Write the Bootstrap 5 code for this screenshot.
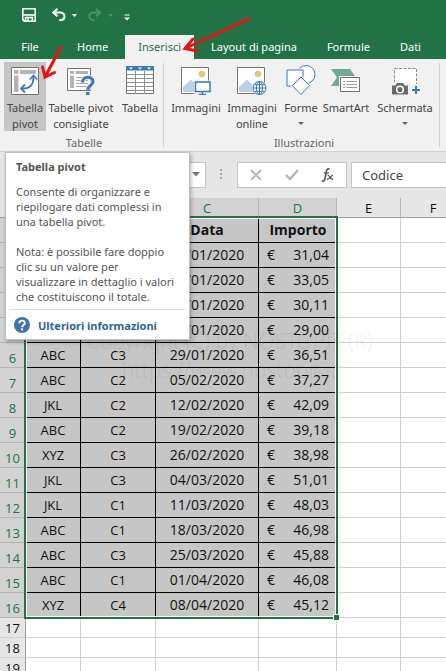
<!DOCTYPE html>
<html lang="it">
<head>
<meta charset="utf-8">
<meta name="viewport" content="width=device-width, initial-scale=1">
<title>Tabella pivot</title>
<link href="https://cdn.jsdelivr.net/npm/bootstrap@5.3.0/dist/css/bootstrap.min.css" rel="stylesheet">
<style>
  body { font-family: "Noto Sans", "Open Sans", sans-serif; font-size: 11px; line-height: 16px; color: #444; background: #fff; }
  button { font: inherit; color: inherit; background: none; border: 0; padding: 0; }
  svg { display: block; flex: none; }
  .app-top { background: #217346; color: #fff; }
  .quick-bar { height: 35px; padding: 0 0 5px 22px; }
  .tab-strip { height: 24px; }
  .tab-btn { height: 24px; padding: 0 13px; white-space: nowrap; }
  .tab-file { width: 60px; }
  .tab-on { background: #f1f1f1; color: #217346; }
  .ribbon { background: #f1f1f1; border-bottom: 1px solid #d2d2d2; height: 93px; }
  .rb-group { padding: 3px 0 0 4px; position: relative; }
  .rb-group::after { content: ""; position: absolute; right: 0; top: 4px; bottom: 4px; width: 1px; background: #d2d2d2; }
  .rb-btn { height: 69px; padding-top: 3px; white-space: nowrap; }
  .rb-btn svg { margin-bottom: 5px; }
  .rb-on { background: #c6c6c6; }
  .w-s { width: 42px; } .w-m { width: 48px; } .w-l { width: 56px; } .w-xl { width: 70px; }
  .rb-name { color: #666; margin-top: 3px; line-height: 18px; }
  .caret { width: 0; border: 3px solid transparent; border-top: 3px solid #666; border-bottom: 0; margin-top: 6px; }
  .formula { background: #e6e6e6; padding: 10px 0 11px 5px; height: 46px; }
  .fbox { background: #fff; border: 1px solid #c6c6c6; height: 26px; border-radius: 0; font-size: 13px; color: #444; outline: 0; }
  .name-box { width: 201px; }
  .fx-box { width: 110px; margin: 0 4px 0 14px; }
  .dots { margin-left: 14px; }
  .code-input { padding: 0 10px; }
  .sheet { min-height: 0; }
  .grid { table-layout: fixed; width: 100%; min-width: 466px; border-collapse: separate; border-spacing: 0; font-family: "Open Sans", sans-serif; font-size: 14px; color: #111; }
  .grid th, .grid td { padding: 0; height: 20px; line-height: 18px; border: 0 solid #d0d0d0; border-width: 0 1px 1px 0; text-align: center; white-space: nowrap; overflow: hidden; }
  .grid thead th { background: #e6e6e6; font-weight: 400; border-color: #b4b4b4 #b4b4b4 #9b9b9b; font-size: 13px; }
  .grid tbody th { background: #e6e6e6; font-weight: 400; font-size: 13px; border-right-color: #9b9b9b; vertical-align: bottom; }
  .grid thead th.on, .grid .sel th { background: #d2d2d2; color: #217346; }
  .grid .sel th, .grid .sel td { height: 25px; }
  .grid .sel th { border-bottom-color: #b4b4b4; }
  .grid .sel td:nth-child(-n+5) { background: #c6c6c6; border-color: #000; vertical-align: middle; }
  .grid .sel td:nth-child(-n+3) { font-size: 13px; }
  .grid .sel td:nth-child(5) { padding: 0 7px 0 8px; }
  .grid .title-row td:nth-child(n) { font-weight: 700; font-size: 14px; }
  .c-head { width: 26px; } .c-a { width: 55px; } .c-b { width: 75px; } .c-c { width: 103px; } .c-d { width: 78px; } .c-e { width: 64px; }
  .sel-frame { left: 24px; top: 18px; width: 314px; height: 403px; border: 2px solid #217346; box-shadow: inset 0 0 0 1px #fff; }
  .sel-handle { right: -4px; bottom: -4px; width: 7px; height: 7px; background: #217346; border: 1px solid #fff; }
  .stamp { left: 87px; top: 129px; font-size: 21px; line-height: 29px; color: rgba(0,0,0,.08); font-weight: 300; white-space: nowrap; text-align: center; }
  .tip { left: 5px; top: 152px; width: 185px; height: 188px; background: #fff; border: 1px solid #c0c0c0; box-shadow: 1px 2px 4px rgba(0,0,0,.3); color: #555; line-height: 15px; padding: 6px 4px 0; }
  .tip-text { padding: 0 6px; white-space: nowrap; }
  .tip-text p { margin: 0 0 15px; }
  .tip-text .tip-title { margin-bottom: 10px; font-weight: 700; }
  .tip-foot { border-top: 1px solid #d8d8d8; margin-top: -10px; padding: 7px 4px; }
  .tip-foot a { color: #2b6496; font-weight: 700; text-decoration: none; white-space: nowrap; }
  .arrows { left: 0; top: 0; pointer-events: none; }
</style>
<script src="https://cdn.jsdelivr.net/npm/bootstrap@5.3.0/dist/js/bootstrap.bundle.min.js"></script>
</head>
<body class="vh-100 overflow-hidden d-flex flex-column position-relative">

<header class="app-top">
  <div class="quick-bar d-flex align-items-center">
    <button type="button" aria-label="Salva"><svg width="14" height="14" viewBox="0 0 14 14" fill="none" stroke="#fff" stroke-width="1.6"><path d="M.8.8h12.4v12.4H2.3L.8 11.7z"/><path d="M1.5 7h11"/><path d="M3.5 13V9.500h6.800V13M6 10.500v2.500"/></svg></button>
    <button type="button" class="d-flex align-items-center ms-3" aria-label="Annulla"><svg width="14" height="14" viewBox="0 0 14 14" fill="none" stroke="#fff" stroke-width="2"><path d="M5.500.8 1.300 4.500 5.500 8.200M1.500 4.500h6.500c6 0 6.300 7.800-.8 7.800"/></svg><svg class="ms-1" width="8" height="3"><path d="M2 0h5L4.500 3z" fill="#fff"/></svg></button>
    <button type="button" class="d-flex align-items-center ms-2" aria-label="Ripeti"><svg width="16" height="14" viewBox="0 0 16 14" fill="none" stroke="#4e9068" stroke-width="2"><path d="M10 .8l4.200 3.700L10 8.200M14 4.500H8c-6.500 0-6.500 7.500.5 7.800"/></svg><svg class="ms-1" width="8" height="3"><path d="M2 0h5L4.500 3z" fill="#4e9068"/></svg></button>
    <button type="button" class="mt-1" aria-label="Personalizza"><svg width="24" height="7"><path d="M10.500 1h5" stroke="#fff"/><path d="M10 3.500h6L13 6.500z" fill="#fff"/></svg></button>
  </div>
  <nav class="tab-strip d-flex gap-1">
    <button type="button" class="tab-btn tab-file">File</button>
    <button type="button" class="tab-btn">Home</button>
    <button type="button" class="tab-btn tab-on">Inserisci</button>
    <button type="button" class="tab-btn">Layout di pagina</button>
    <button type="button" class="tab-btn">Formule</button>
    <button type="button" class="tab-btn">Dati</button>
  </nav>
</header>

<section class="ribbon d-flex">
  <div class="rb-group">
    <div class="d-flex">
      <button type="button" class="rb-btn rb-on w-s d-flex flex-column align-items-center">
        <svg width="28" height="30" viewBox="0 0 28 30"><path d="M.5 2.500h27v27H.5z" fill="#fff" stroke="#737373"/><path d="M3 5h4.500v4H3zM9 5h16v4H9zM3 10.500h4.500V27H3z" fill="#b3b3b3"/><path d="M11 23.500c8 .5 11.500-3.500 11.500-12" fill="none" stroke="#3b78b5" stroke-width="1.800"/><path d="M18.800 14.500l3.700-4 3.700 4M14 19.500l-4 4 4 4" fill="none" stroke="#3b78b5" stroke-width="1.800"/></svg>
        <span>Tabella</span><span>pivot</span>
      </button>
      <button type="button" class="rb-btn w-xl d-flex flex-column align-items-center">
        <svg width="28" height="30" viewBox="0 0 28 30"><path d="M.5 3.500h23v22H.5z" fill="#fff" stroke="#737373"/><path d="M3 6h4v3H3zM8.500 6H21v3H8.500zM3 10.500h4V23H3z" fill="#b3b3b3"/><path d="M9 12.500h12M9 15.500h12M9 18.500h12M9 21.500h12" stroke="#aaa"/><path d="M15.500 17.500c0-7 10.500-7 10.500-.8 0 4-5.200 3.600-5.200 8" fill="none" stroke="#f1f1f1" stroke-width="5"/><path d="M15.500 17.500c0-7 10.500-7 10.500-.8 0 4-5.200 3.600-5.200 8" fill="none" stroke="#3b78b5" stroke-width="3"/><path d="M19 27h3.500v3H19z" fill="#3b78b5"/></svg>
        <span>Tabelle pivot</span><span>consigliate</span>
      </button>
      <button type="button" class="rb-btn w-m d-flex flex-column align-items-center">
        <svg width="28" height="30" viewBox="0 0 28 30"><path d="M.5 2.500h27v26H.5z" fill="#fff" stroke="#737373"/><path d="M0 1h28v4.500H0z" fill="#3b78b5"/><path d="M3 2.500h4L5 4.500zM12 2.500h4L14 4.500zM21 2.500h4L23 4.500z" fill="#fff"/><path d="M1 9.500h26M1 13.500h26M1 17.500h26M1 21.500h26M1 25.500h26M9.500 6v23M18.500 6v23" stroke="#909090"/></svg>
        <span>Tabella</span>
      </button>
    </div>
    <div class="rb-name text-center">Tabelle</div>
  </div>
  <div class="rb-group">
    <div class="d-flex">
      <button type="button" class="rb-btn w-l d-flex flex-column align-items-center">
        <svg width="30" height="30" viewBox="0 0 30 30"><path d="M.5 2.500h27v26H.5z" fill="#fff" stroke="#737373"/><circle cx="21" cy="9" r="3.200" fill="#e6c17a"/><path d="M2 27v-5l8-7.500 9 9V27z" fill="#bdd0e6"/><path d="M13 15.500h17V29H13z" fill="#f1f1f1"/><path d="M14.500 17h14.500v9.500H14.500z" fill="#fff" stroke="#3b78b5" stroke-width="1.500"/><path d="M18 29.300h7M21.500 26.500v3" stroke="#3b78b5" stroke-width="1.300"/></svg>
        <span>Immagini</span>
      </button>
      <button type="button" class="rb-btn w-l d-flex flex-column align-items-center">
        <svg width="30" height="30" viewBox="0 0 30 30"><path d="M.5 2.500h27v26H.5z" fill="#fff" stroke="#737373"/><circle cx="21" cy="9" r="3.200" fill="#e6c17a"/><path d="M2 27v-5l8-7.500 9 9V27z" fill="#bdd0e6"/><circle cx="22.500" cy="23" r="7.500" fill="#f1f1f1"/><g fill="#fff" stroke="#3b78b5"><circle cx="22.500" cy="23" r="6.500"/><ellipse cx="22.500" cy="23" rx="3" ry="6.500"/><path d="M16 23h13M17 19.700h11M17 26.300h11M22.500 16.500v13"/></g></svg>
        <span>Immagini</span><span>online</span>
      </button>
      <button type="button" class="rb-btn w-s d-flex flex-column align-items-center">
        <svg width="30" height="30" viewBox="0 0 30 30" fill="#fff" stroke="#3b78b5"><circle cx="20" cy="9.500" r="9"/><path d="M1 5h16v16H1z" stroke="#f1f1f1" stroke-width="3"/><path d="M1 5h16v16H1z"/><path d="M15 11l9.500 9.500L15 30 5.500 20.500z" stroke="#f1f1f1" stroke-width="2"/><path d="M15 12l8.700 8.700L15 29.400l-8.700-8.700z"/></svg>
        <span>Forme</span><span class="caret"></span>
      </button>
      <button type="button" class="rb-btn w-m d-flex flex-column align-items-center">
        <svg width="30" height="30" viewBox="0 0 30 30"><path d="M0 4h19l6 8.500-6 8.500H0l6-8.500z" fill="#73a892"/><path d="M8 11h22v17H8z" fill="#f1f1f1"/><path d="M9.500 12.500h19v14h-19z" fill="#fff" stroke="#737373"/><path d="M12 16.500h2M12 19.500h2M12 22.500h2M15.500 16.500H26M15.500 19.500H26M15.500 22.500H26" stroke="#999"/></svg>
        <span>SmartArt</span>
      </button>
      <button type="button" class="rb-btn w-xl d-flex flex-column align-items-center">
        <svg width="30" height="30" viewBox="0 0 30 30"><path d="M4.500 3.500h22v21h-22z" fill="#fff" stroke="#8a8a8a" stroke-dasharray="3 1.500"/><path d="M1 17h19v14H1zM20 19h9v9h-9z" fill="#f1f1f1"/><path d="M2 20.500h3.500l1.500-2.500h6l1.500 2.500H18V29.500H2z" fill="#6a6a6a"/><circle cx="10" cy="24.500" r="3.300" fill="#6a6a6a" stroke="#fff" stroke-width="1.500"/><path d="M22 25h8M26 21v8" stroke="#3b78b5" stroke-width="2"/></svg>
        <span>Schermata</span><span class="caret"></span>
      </button>
    </div>
    <div class="rb-name text-center">Illustrazioni</div>
  </div>
</section>

<section class="formula d-flex align-items-center">
  <div class="fbox name-box d-flex align-items-center justify-content-end px-1"><button type="button" aria-label="Casella nome"><svg width="10" height="5"><path d="M1 0h8L5 4.500z" fill="#777"/></svg></button></div>
  <svg class="dots" width="3" height="11" fill="#aaa"><path d="M0 0h2v2H0zM0 4h2v2H0zM0 8h2v2H0z"/></svg>
  <div class="fbox fx-box d-flex align-items-center justify-content-between px-2">
    <button type="button" class="ms-1" aria-label="Annulla inserimento"><svg width="12" height="12" stroke="#b4b4b4" stroke-width="1.800"><path d="M1 1l10 10M11 1L1 11"/></svg></button>
    <button type="button" aria-label="Conferma"><svg width="14" height="12" fill="none" stroke="#b4b4b4" stroke-width="2.400"><path d="M1 6l4 4 8-9"/></svg></button>
    <button type="button" class="me-1" aria-label="Inserisci funzione"><svg width="13" height="14" viewBox="0 0 13 14" fill="none" stroke="#555"><path d="M8.500 1.200C6.500.3 5.700 1.500 5.200 4L4 10.500C3.500 13 2.500 13.500.8 12.800" stroke-width="1.600"/><path d="M2.500 5H8" stroke-width="1.200"/><path d="M6.500 7.200c2-.8 2.300 4.600 5.500 4M12 7.200c-2 0-3.500 4.500-6 4" stroke-width="1.300"/></svg></button>
  </div>
  <input class="fbox code-input flex-grow-1 border-end-0" type="text" size="4" value="Codice" aria-label="Barra della formula">
</section>

<main class="sheet flex-grow-1 overflow-hidden position-relative">
  <table class="grid">
    <colgroup><col class="c-head"><col class="c-a"><col class="c-b"><col class="c-c"><col class="c-d"><col class="c-e"><col></colgroup>
    <thead><tr><th></th><th class="on"></th><th class="on"></th><th class="on">C</th><th class="on">D</th><th>E</th><th>F</th></tr></thead>
    <tbody>
      <tr class="sel title-row"><th></th><td></td><td></td><td>Data</td><td>Importo</td><td></td><td></td></tr>
      <tr class="sel"><th></th><td></td><td></td><td>01/01/2020</td><td><div class="d-flex justify-content-between"><span>€</span><span>31,04</span></div></td><td></td><td></td></tr>
      <tr class="sel"><th></th><td></td><td></td><td>08/01/2020</td><td><div class="d-flex justify-content-between"><span>€</span><span>33,05</span></div></td><td></td><td></td></tr>
      <tr class="sel"><th></th><td></td><td></td><td>15/01/2020</td><td><div class="d-flex justify-content-between"><span>€</span><span>30,11</span></div></td><td></td><td></td></tr>
      <tr class="sel"><th></th><td></td><td></td><td>22/01/2020</td><td><div class="d-flex justify-content-between"><span>€</span><span>29,00</span></div></td><td></td><td></td></tr>
      <tr class="sel"><th>6</th><td>ABC</td><td>C3</td><td>29/01/2020</td><td><div class="d-flex justify-content-between"><span>€</span><span>36,51</span></div></td><td></td><td></td></tr>
      <tr class="sel"><th>7</th><td>ABC</td><td>C2</td><td>05/02/2020</td><td><div class="d-flex justify-content-between"><span>€</span><span>37,27</span></div></td><td></td><td></td></tr>
      <tr class="sel"><th>8</th><td>JKL</td><td>C2</td><td>12/02/2020</td><td><div class="d-flex justify-content-between"><span>€</span><span>42,09</span></div></td><td></td><td></td></tr>
      <tr class="sel"><th>9</th><td>ABC</td><td>C2</td><td>19/02/2020</td><td><div class="d-flex justify-content-between"><span>€</span><span>39,18</span></div></td><td></td><td></td></tr>
      <tr class="sel"><th>10</th><td>XYZ</td><td>C3</td><td>26/02/2020</td><td><div class="d-flex justify-content-between"><span>€</span><span>38,98</span></div></td><td></td><td></td></tr>
      <tr class="sel"><th>11</th><td>JKL</td><td>C3</td><td>04/03/2020</td><td><div class="d-flex justify-content-between"><span>€</span><span>51,01</span></div></td><td></td><td></td></tr>
      <tr class="sel"><th>12</th><td>JKL</td><td>C1</td><td>11/03/2020</td><td><div class="d-flex justify-content-between"><span>€</span><span>48,03</span></div></td><td></td><td></td></tr>
      <tr class="sel"><th>13</th><td>ABC</td><td>C1</td><td>18/03/2020</td><td><div class="d-flex justify-content-between"><span>€</span><span>46,98</span></div></td><td></td><td></td></tr>
      <tr class="sel"><th>14</th><td>ABC</td><td>C3</td><td>25/03/2020</td><td><div class="d-flex justify-content-between"><span>€</span><span>45,88</span></div></td><td></td><td></td></tr>
      <tr class="sel"><th>15</th><td>ABC</td><td>C1</td><td>01/04/2020</td><td><div class="d-flex justify-content-between"><span>€</span><span>46,08</span></div></td><td></td><td></td></tr>
      <tr class="sel"><th>16</th><td>XYZ</td><td>C4</td><td>08/04/2020</td><td><div class="d-flex justify-content-between"><span>€</span><span>45,12</span></div></td><td></td><td></td></tr>
      <tr><th>17</th><td></td><td></td><td></td><td></td><td></td><td></td></tr>
      <tr><th>18</th><td></td><td></td><td></td><td></td><td></td><td></td></tr>
      <tr><th>19</th><td></td><td></td><td></td><td></td><td></td><td></td></tr>
    </tbody>
  </table>
  <div class="sel-frame position-absolute"><div class="sel-handle position-absolute"></div></div>
  <div class="stamp position-absolute">Copyright (C) by NOSTOPIT (R)<br>https://www.nostopit.it</div>
</main>

<aside class="tip position-absolute" role="note">
  <div class="tip-text">
    <p class="tip-title">Tabella pivot</p>
    <p>Consente di organizzare e<br>riepilogare dati complessi in<br>una tabella pivot.</p>
    <p>Nota: è possibile fare doppio<br>clic su un valore per<br>visualizzare in dettaglio i valori<br>che costituiscono il totale.</p>
  </div>
  <div class="tip-foot d-flex align-items-center gap-2">
    <svg width="16" height="16" viewBox="0 0 16 16"><circle cx="8" cy="8" r="8" fill="#3f74a8"/><path d="M5.300 6.300c0-3.600 5.500-3.400 5.500-.3 0 2-2.700 2-2.700 4.200" fill="none" stroke="#fff" stroke-width="1.900"/><path d="M7.100 11.400h2v2h-2z" fill="#fff"/></svg>
    <a href="#">Ulteriori informazioni</a>
  </div>
</aside>

<svg class="arrows position-absolute" width="260" height="90" fill="none" stroke="#e31414" stroke-width="3" stroke-linecap="round"><path d="M61 47L45 77M42.500 67L45 77l9.500-4.500"/><path d="M249 19L185 48.500M193 39l-8 9.500 12.500 2.500"/></svg>
</body>
</html>
